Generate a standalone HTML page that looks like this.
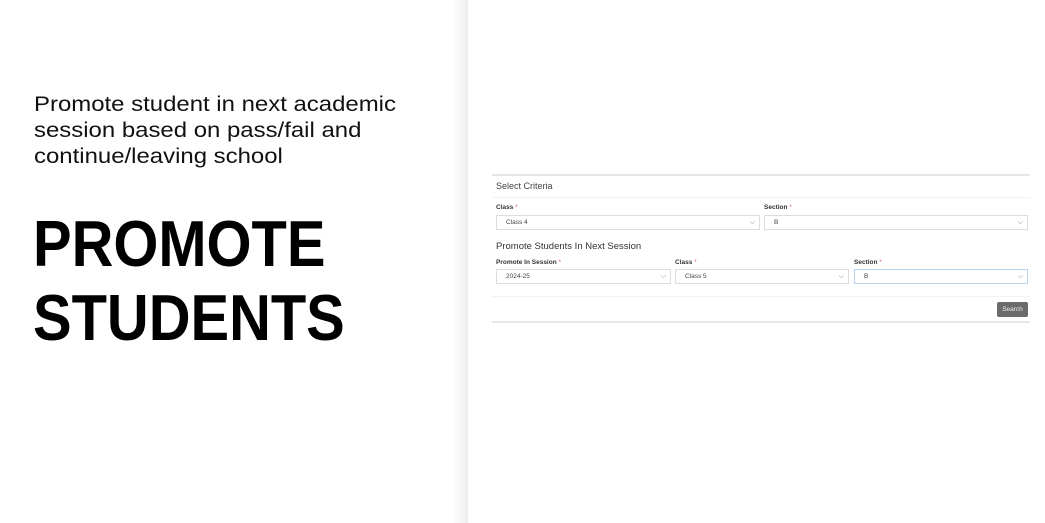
<!DOCTYPE html>
<html><head><style>
body{margin:0;width:1045px;height:523px;background:#fff;position:relative;overflow:hidden;font-family:"Liberation Sans",sans-serif}
.shadow{position:absolute;left:452px;top:0;width:16px;height:523px;background:linear-gradient(to right,rgba(0,0,0,0),rgba(0,0,0,0.07))}
.desc{position:absolute;left:34px;top:92px;font-size:21px;line-height:26px;color:#111;transform:scaleX(1.14);transform-origin:left top;white-space:nowrap}
.h{position:absolute;left:33px;top:207px;font-size:65px;font-weight:bold;line-height:74px;color:#000;transform:scaleX(0.89);transform-origin:left top;white-space:nowrap}
.a{position:absolute}
.line{position:absolute;background:#e6e6e6}
.t{position:absolute;font-size:9px;color:#444}
.lbl{position:absolute;font-size:6.5px;font-weight:bold;color:#333}
.lbl b{color:#e55;font-weight:normal}
.sel{position:absolute;height:13px;border:1px solid #ddd;background:#fff;font-size:6.5px;color:#444;line-height:13px;box-sizing:content-box}
.sel span{position:absolute;left:9px}
.sel i{position:absolute;right:4px;top:0;font-style:normal;font-size:7px;color:#777}
</style></head><body>
<div class="shadow"></div>
<div class="desc">Promote student in next academic<br>session based on pass/fail and<br>continue/leaving school</div>
<div class="h">PROMOTE<br>STUDENTS</div>

<div class="line" style="left:492px;top:174px;width:538px;height:2px"></div>
<div class="t" style="left:496px;top:181px">Select Criteria</div>
<div class="line" style="left:492px;top:197px;width:538px;height:1px;background:#f2f2f2"></div>
<div class="lbl" style="left:496px;top:204px">Class <b>*</b></div>
<div class="sel" style="left:496px;top:215px;width:262px"><span>Class 4</span><i>⌵</i></div>
<div class="lbl" style="left:764px;top:204px">Section <b>*</b></div>
<div class="sel" style="left:764px;top:215px;width:262px"><span>B</span><i>⌵</i></div>
<div class="t" style="left:496px;top:241px;font-size:9.5px;color:#333">Promote Students In Next Session</div>
<div class="lbl" style="left:496px;top:259px">Promote In Session <b>*</b></div>
<div class="sel" style="left:496px;top:269px;width:173px"><span>2024-25</span><i>⌵</i></div>
<div class="lbl" style="left:675px;top:259px">Class <b>*</b></div>
<div class="sel" style="left:675px;top:269px;width:172px"><span>Class 5</span><i>⌵</i></div>
<div class="lbl" style="left:854px;top:259px">Section <b>*</b></div>
<div class="sel" style="left:854px;top:269px;width:172px;border-color:#b9d3ec"><span>B</span><i>⌵</i></div>
<div class="line" style="left:492px;top:296px;width:538px;height:1px;background:#f2f2f2"></div>
<div class="a" style="left:997px;top:302px;width:31px;height:15px;background:#6b6b6b;border-radius:2px;color:#eee;font-size:6.5px;line-height:15px;text-align:center">Search</div>
<div class="line" style="left:492px;top:321px;width:538px;height:2px"></div>
</body></html>
